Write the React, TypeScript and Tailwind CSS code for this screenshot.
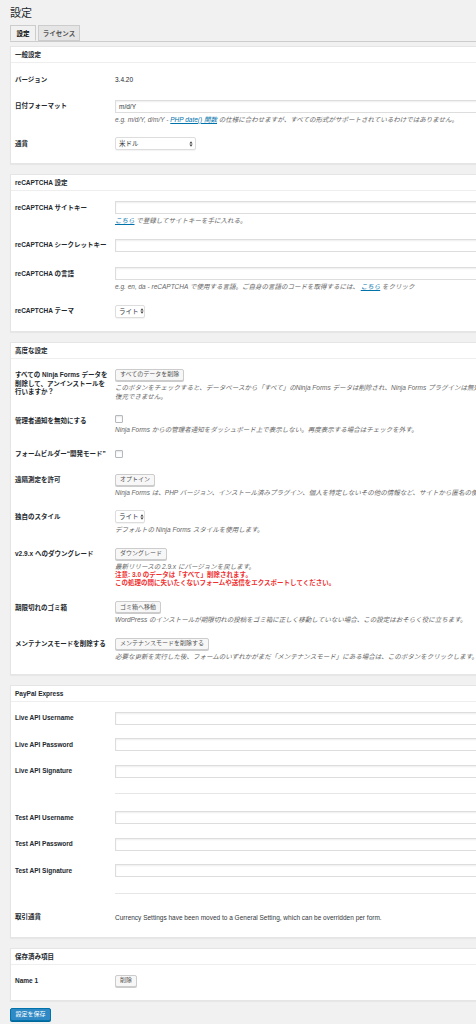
import type { ReactNode } from "react";

const FONT = "font-['Liberation_Sans','Noto_Sans_CJK_JP',sans-serif]";

function Card({ title, children }: { title: string; children: ReactNode }) {
  return (
    <div className="mt-[10px] bg-white border border-[#e5e5e5] shadow-[0_1px_1px_rgba(0,0,0,0.04)]">
      <div className="h-[16px] px-[4px] flex items-center border-b border-[#eeeeee] text-[6.5px] font-bold text-[#23282d]">
        {title}
      </div>
      <div className="pt-[3.5px] pb-[6px] pl-[4px]">{children}</div>
    </div>
  );
}

function Row({
  label,
  children,
  className = "",
}: {
  label?: ReactNode;
  children: ReactNode;
  className?: string;
}) {
  return (
    <div className={`flex ${className}`}>
      <div className="w-[100px] shrink-0 pt-[9px] pb-[6.75px] leading-[8.5px] text-[6.5px] font-bold text-[#23282d]">
        {label}
      </div>
      <div className="flex-1 min-w-0 py-[6.75px]">{children}</div>
    </div>
  );
}

function TextInput({ value }: { value?: string }) {
  return (
    <div className="h-[13px] w-[420px] border border-[#dddddd] bg-white shadow-[inset_0_1px_2px_rgba(0,0,0,0.07)] px-[3px] flex items-center text-[6.5px] text-[#32373c]">
      {value}
    </div>
  );
}

function Arrows() {
  return (
    <svg width="4" height="6" viewBox="0 0 4 6" className="shrink-0">
      <path d="M2 0.3 L3.6 2.4 H0.4 Z M2 5.7 L3.6 3.6 H0.4 Z" fill="#444" />
    </svg>
  );
}

function Select({ value, width }: { value: string; width: string }) {
  return (
    <div
      className={`h-[13px] ${width} border border-[#dddddd] rounded-[2px] bg-white shadow-[0_1px_1px_rgba(0,0,0,0.05)] pl-[3px] pr-[2px] flex items-center justify-between gap-[1px] text-[6.5px] text-[#32373c] whitespace-nowrap`}
    >
      <span>{value}</span>
      <Arrows />
    </div>
  );
}

function Button({ children }: { children: ReactNode }) {
  return (
    <div className="flex w-fit h-[12px] px-[4px] items-center border border-[#cccccc] bg-[#f7f7f7] shadow-[0_1px_0_#cccccc] rounded-[2px] text-[6px] text-[#555555] whitespace-nowrap">
      {children}
    </div>
  );
}

function Checkbox() {
  return <div className="w-[8px] h-[8px] border border-[#b4b9be] bg-white rounded-[1px] shadow-[inset_0_1px_2px_rgba(0,0,0,0.1)]" />;
}

function Desc({ children, className = "mt-[2px]" }: { children: ReactNode; className?: string }) {
  return (
    <div className={`${className} leading-[9px] text-[6.5px] italic text-[#666666] whitespace-nowrap`}>
      {children}
    </div>
  );
}

function Link({ children }: { children: ReactNode }) {
  return <span className="text-[#0073aa] underline">{children}</span>;
}

function Line() {
  return (
    <div className="flex">
      <div className="w-[100px] shrink-0" />
      <div className="flex-1 pt-[8.5px] pb-[10.5px]">
        <div className="h-px bg-[#e6e6e6]" />
      </div>
    </div>
  );
}

export default function App() {
  return (
    <div className={`w-[476px] min-h-[1024px] overflow-hidden bg-[#f1f1f1] ${FONT} text-[6.5px] leading-[9px] text-[#23282d]`}>
      <div className="w-[760px] pl-[10px]">
        {/* Title */}
        <div className="pt-[6px] h-[20px] leading-[14px] text-[11px]">設定</div>

        {/* Tabs */}
        <div className="mt-[5px] flex gap-[2px] border-b border-[#cccccc]">
          <div className="w-[26px] h-[16px] -mb-px flex items-center justify-center border border-[#cccccc] border-b-[#f1f1f1] bg-[#f1f1f1] text-[6.5px] font-bold text-[#000000]">
            設定
          </div>
          <div className="w-[42px] h-[16px] flex items-center justify-center border border-[#cccccc] bg-[#e5e5e5] text-[6.5px] font-bold text-[#555555]">
            ライセンス
          </div>
        </div>

        <div className="-mt-[6px]">
          <Card title="一般設定">
            <Row label="バージョン">
              <div className="h-[13px] flex items-center text-[6.5px]">3.4.20</div>
            </Row>
            <Row label="日付フォーマット">
              <TextInput value="m/d/Y" />
              <Desc>
                e.g. m/d/Y, d/m/Y - <Link>PHP date() 関数</Link> の仕様に合わせますが、すべての形式がサポートされているわけではありません。
              </Desc>
            </Row>
            <Row label="通貨">
              <Select value="米ドル" width="w-[81px]" />
            </Row>
          </Card>
        </div>

        <Card title="reCAPTCHA 設定">
          <Row label="reCAPTCHA サイトキー">
            <TextInput />
            <Desc>
              <Link>こちら</Link> で登録してサイトキーを手に入れる。
            </Desc>
          </Row>
          <Row label="reCAPTCHA シークレットキー">
            <TextInput />
          </Row>
          <Row label="reCAPTCHA の言語" className="mt-[2px]">
            <TextInput />
            <Desc>
              e.g. en, da - reCAPTCHA で使用する言語。ご自身の言語のコードを取得するには、 <Link>こちら</Link> をクリック
            </Desc>
          </Row>
          <Row label="reCAPTCHA テーマ">
            <Select value="ライト" width="w-[30px]" />
          </Row>
        </Card>

        <Card title="高度な設定">
          <Row
            label={
              <>
                すべての Ninja Forms データを
                <br />
                削除して、アンインストールを
                <br />
                行いますか？
              </>
            }
          >
            <Button>すべてのデータを削除</Button>
            <Desc>
              このボタンをチェックすると、データベースから「すべて」のNinja Forms データは削除され、Ninja Forms プラグインは無効になります。このデータは
              <br />
              復元できません。
            </Desc>
          </Row>
          <Row label="管理者通知を無効にする">
            <div className="h-[9px] pt-[1px]">
              <Checkbox />
            </div>
            <Desc className="mt-[1.5px]">
              Ninja Forms からの管理者通知をダッシュボード上で表示しない。再度表示する場合はチェックを外す。
            </Desc>
          </Row>
          <Row label="フォームビルダー“開発モード”">
            <div className="h-[13px] flex items-center">
              <Checkbox />
            </div>
          </Row>
          <Row label="遠隔測定を許可">
            <Button>オプトイン</Button>
            <Desc>
              Ninja Forms は、PHP バージョン、インストール済みプラグイン、個人を特定しないその他の情報など、サイトから匿名の使用統計情報を収集します。
            </Desc>
          </Row>
          <Row label="独自のスタイル">
            <Select value="ライト" width="w-[30px]" />
            <Desc>デフォルトの Ninja Forms スタイルを使用します。</Desc>
          </Row>
          <Row label="v2.9.x へのダウングレード">
            <Button>ダウングレード</Button>
            <Desc>最新リリースの 2.9.x にバージョンを戻します。</Desc>
            <div className="leading-[8.5px] text-[6.5px] font-bold text-[#f03030] whitespace-nowrap">
              注意: 3.0 のデータは「すべて」削除されます。
              <br />
              この処理の間に失いたくないフォームや送信をエクスポートしてください。
            </div>
          </Row>
          <Row label="期限切れのゴミ箱">
            <Button>ゴミ箱へ移動</Button>
            <Desc>
              WordPress のインストールが期限切れの投稿をゴミ箱に正しく移動していない場合、この設定はおそらく役に立ちます。
            </Desc>
          </Row>
          <Row label="メンテナンスモードを削除する">
            <Button>メンテナンスモードを削除する</Button>
            <Desc>
              必要な更新を実行した後、フォームのいずれかがまだ「メンテナンスモード」にある場合は、このボタンをクリックします。
            </Desc>
          </Row>
        </Card>

        <Card title="PayPal Express">
          <Row label="Live API Username">
            <TextInput />
          </Row>
          <Row label="Live API Password">
            <TextInput />
          </Row>
          <Row label="Live API Signature">
            <TextInput />
          </Row>
          <Line />
          <Row label="Test API Username">
            <TextInput />
          </Row>
          <Row label="Test API Password">
            <TextInput />
          </Row>
          <Row label="Test API Signature">
            <TextInput />
          </Row>
          <Line />
          <Row label="取引通貨">
            <div className="h-[13px] flex items-center text-[6.5px] text-[#32373c] whitespace-nowrap">
              Currency Settings have been moved to a General Setting, which can be overridden per form.
            </div>
          </Row>
        </Card>

        <Card title="保存済み項目">
          <Row label="Name 1">
            <Button>削除</Button>
          </Row>
        </Card>

        <div className="mt-[7px] flex w-fit h-[13px] px-[4.5px] items-center border border-[#0073aa] bg-[#2e89c4] rounded-[2px] shadow-[0_1px_0_#006799] text-[6px] text-white">
          設定を保存
        </div>
      </div>
    </div>
  );
}
